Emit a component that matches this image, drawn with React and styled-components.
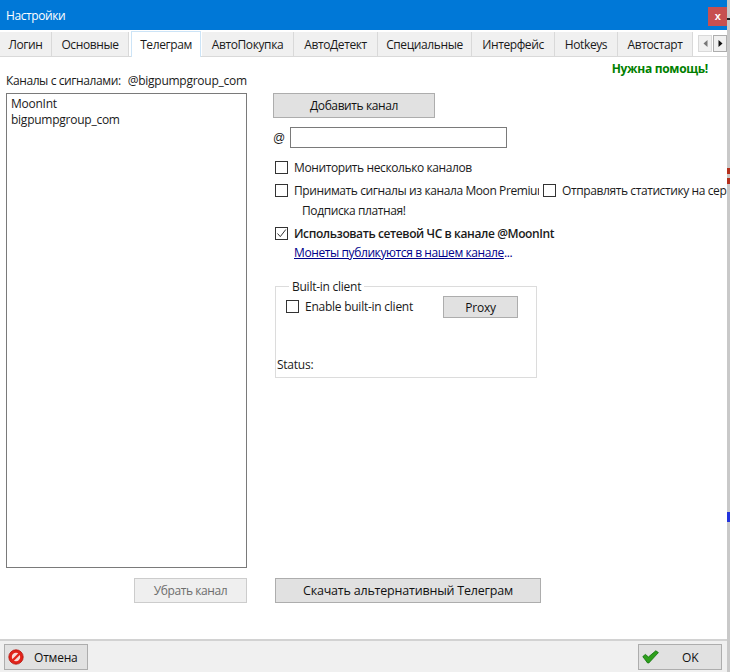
import React from 'react'
import styled, { createGlobalStyle } from 'styled-components'

const Global = createGlobalStyle`
  html, body { margin: 0; padding: 0; background: #fff; }
  body {
    font-family: "Open Sans", "Noto Sans", sans-serif;
    font-size: 12px;
    letter-spacing: -0.4px;
    color: #1a1a1a;
  }
  * { box-sizing: border-box; }
`

const Page = styled.div`
  display: flex;
  width: 730px;
  height: 672px;
  overflow: hidden;
`

const Dialog = styled.div`
  display: flex;
  flex-direction: column;
  width: 727px;
  height: 100%;
`

// what shows of the window behind the dialog
const BehindStrip = styled.div`
  width: 3px;
  height: 100%;
  background: linear-gradient(
    to bottom,
    #c9c9c9 0, #c9c9c9 18px, #222 18px, #222 20px, #c9c9c9 20px, #c9c9c9 168px,
    #b5301c 168px, #b5301c 174px, #c9c9c9 174px, #c9c9c9 178px,
    #b5301c 178px, #b5301c 184px, #c9c9c9 184px, #c9c9c9 512px,
    #2233dd 512px, #2233dd 522px, #c9c9c9 522px
  );
`

const TitleBar = styled.div`
  display: flex;
  align-items: center;
  justify-content: space-between;
  flex: none;
  height: 30px;
  padding: 0 0 0 6px;
  background: #0078d7;
  color: #fff;
  font-size: 12px;
`

const CloseButton = styled.div`
  display: flex;
  align-items: center;
  justify-content: center;
  width: 19px;
  height: 19px;
  margin-top: 3px;
  background: #c75050;
  color: #fff;
  font-family: "Liberation Sans", sans-serif;
  font-size: 11px;
  font-weight: 700;
  line-height: 1;
`

const TabStrip = styled.div`
  display: flex;
  align-items: flex-end;
  flex: none;
  height: 27px;
  background: #fff;
  border-bottom: 1px solid #d9d9d9;
`

const Tab = styled.div`
  display: flex;
  align-items: center;
  justify-content: center;
  flex: none;
  width: ${p => p.$w}px;
  height: ${p => (p.$active ? 26 : 24)}px;
  margin: ${p => (p.$active ? '0 1px -1px 2px' : '0')};
  background: ${p => (p.$active ? '#fff' : '#f0f0f0')};
  border: 1px solid ${p => (p.$active ? '#cce4f7' : '#d9d9d9')};
  border-width: ${p => (p.$active ? '1px 1px 0 1px' : '0 1px 0 0')};
`

const Scrollers = styled.div`
  display: flex;
  gap: 1px;
  margin: 0 0 4px 5px;
`

const ScrollButton = styled.div`
  display: flex;
  align-items: center;
  justify-content: center;
  width: 14px;
  height: 17px;
  background: #f0f0f0;
  border: 1px solid ${p => (p.$dark ? '#adadad' : '#d9d9d9')};
  color: ${p => (p.$dark ? '#111' : '#777')};
`

const Body = styled.div`
  display: grid;
  grid-template-columns: 241px 454px;
  column-gap: 26px;
  flex: 1;
  min-height: 0;
  padding: 0 0 36px 6px;
`

const LeftColumn = styled.div`
  display: flex;
  flex-direction: column;
  padding-top: 16px;
  min-height: 0;
`

const RightColumn = styled.div`
  display: flex;
  flex-direction: column;
  min-width: 0;
  overflow: hidden;
`

const ChannelsLabel = styled.div`
  display: flex;
  gap: 7px;
  height: 16px;
  line-height: 16px;
  white-space: nowrap;
`

const ChannelName = styled.span`
  letter-spacing: -0.25px;
`

const ChannelList = styled.div`
  flex: 1;
  margin-top: 4px;
  padding: 2px 4px;
  background: #fff;
  border: 1px solid #7a7a7a;
  letter-spacing: -0.25px;
`

const ChannelItem = styled.div`
  height: 16px;
  line-height: 16px;
`

const Button = styled.button`
  display: block;
  flex: none;
  width: ${p => p.$w}px;
  height: ${p => p.$h || 25}px;
  padding: 0;
  background: #e1e1e1;
  border: 1px solid #adadad;
  color: #111;
  font: inherit;
  letter-spacing: inherit;

  &:disabled {
    background: #efefef;
    border-color: #ccc;
    color: #6d6d6d;
  }
`

const RemoveButton = styled(Button)`
  margin: 10px 0 0 auto;
`

const HelpLink = styled.div`
  flex: none;
  height: 16px;
  margin-top: 4px;
  padding-right: 19px;
  line-height: 16px;
  text-align: right;
  color: #008000;
  font-size: 12px;
  font-weight: 700;
  letter-spacing: -0.3px;
`

const AddButton = styled(Button)`
  margin-top: 16px;
`

const NameRow = styled.div`
  display: flex;
  align-items: center;
  flex: none;
  height: 21px;
  margin-top: 9px;
`

const AtSign = styled.span`
  width: 17px;
  font-family: "Liberation Sans", sans-serif;
`

const NameInput = styled.input`
  width: 217px;
  height: 21px;
  padding: 0 2px;
  background: #fff;
  border: 1px solid #7a7a7a;
  border-radius: 0;
  outline: none;
`

const CheckRow = styled.div`
  display: flex;
  align-items: center;
  flex: none;
  height: 20px;
  margin-top: ${p => p.$top}px;
  padding-left: 2px;
  white-space: nowrap;
  font-weight: ${p => (p.$bold ? 600 : 400)};
`

const Box = styled.span`
  display: flex;
  align-items: center;
  justify-content: center;
  flex: none;
  width: 13px;
  height: 13px;
  margin-right: 6px;
  background: #fff;
  border: 1px solid #333;
`

const ClippedLabel = styled.span`
  display: block;
  flex: none;
  width: 245px;
  overflow: hidden;
  margin-right: 4px;
`

const PaidNote = styled.div`
  flex: none;
  height: 16px;
  margin-top: 3px;
  padding-left: 29px;
  line-height: 16px;
`

const LinkRow = styled.div`
  flex: none;
  height: 16px;
  margin-top: 2px;
  padding-left: 21px;
  line-height: 16px;
  color: #00008b;

  a {
    color: inherit;
    text-decoration: underline;
  }
`

const ClientGroup = styled.fieldset`
  flex: none;
  width: 262px;
  height: 100px;
  margin: 17px 0 0 2px;
  padding: 0;
  border: 1px solid #dcdcdc;
`

const GroupTitle = styled.legend`
  height: 16px;
  margin-left: 13px;
  padding: 0 3px;
  line-height: 18px;
  letter-spacing: -0.25px;
`

const GroupBody = styled.div`
  display: flex;
  flex-direction: column;
  height: 83px;
  padding: 2px 0 4px;
  letter-spacing: -0.25px;
`

const ClientRow = styled.div`
  display: flex;
  align-items: center;
  justify-content: space-between;
  padding: 0 18px 0 10px;
`

const EnableLabel = styled.div`
  display: flex;
  align-items: center;
  height: 20px;
  margin-bottom: 2px;
`

const StatusText = styled.div`
  margin-top: auto;
  padding-left: 1px;
  line-height: 16px;
`

const DownloadButton = styled(Button)`
  margin: auto 0 0 2px;
  font-size: 12.5px;
  letter-spacing: -0.2px;
`

const Footer = styled.div`
  display: flex;
  align-items: flex-start;
  justify-content: space-between;
  flex: none;
  height: 33px;
  padding: 3px 5px 0 4px;
  background: #f0f0f0;
  border-top: 2px solid #d2d2d2;
`

const ActionButton = styled.button`
  display: flex;
  align-items: center;
  width: 84px;
  height: 26px;
  padding: 0 0 0 ${p => p.$pad}px;
  background: #e1e1e1;
  border: 1px solid #adadad;
  color: #111;
  font: inherit;
  letter-spacing: -0.2px;
  font-weight: 500;
`

const ActionText = styled.span`
  margin-left: ${p => p.$gap}px;
`

const tabs = [
  ['Логин', 52],
  ['Основные', 77],
  ['Телеграм', 70, true],
  ['АвтоПокупка', 92],
  ['АвтоДетект', 84],
  ['Специальные', 94],
  ['Интерфейс', 83],
  ['Hotkeys', 63],
  ['Автостарт', 75],
]

const Check = () => (
  <svg width="11" height="11" viewBox="0 0 11 11">
    <path d="M1.5 5.5 L4.3 8.6 L9.8 1.5" fill="none" stroke="#333" strokeWidth="1" />
  </svg>
)

const CancelIcon = () => (
  <svg width="16" height="16" viewBox="0 0 16 16">
    <circle cx="8" cy="8" r="7.2" fill="#e2231a" stroke="#b3140e" strokeWidth="0.8" />
    <circle cx="8" cy="8" r="4.2" fill="#f8dcd8" />
    <path d="M3.6 11 L11 3.6 L12.6 5.2 L5.2 12.6 Z" fill="#e2231a" />
  </svg>
)

const OkIcon = () => (
  <svg width="17" height="14" viewBox="0 0 17 14">
    <path
      d="M0.8 6.6 L3.4 4.4 L6.4 7 L13.8 0.8 L16.4 2.6 L6.8 13 L5.6 13 Z"
      fill="#2ea01c"
      stroke="#0f6e0a"
      strokeWidth="0.8"
      strokeLinejoin="round"
    />
  </svg>
)

const Arrow = ({ dir }) => (
  <svg width="5" height="7" viewBox="0 0 5 7">
    <path d={dir === 'left' ? 'M4.5 0 L0.5 3.5 L4.5 7 Z' : 'M0.5 0 L4.5 3.5 L0.5 7 Z'} fill="currentColor" />
  </svg>
)

export default function App() {
  return (
    <Page>
      <Global />
      <Dialog>
        <TitleBar>
          <span>Настройки</span>
          <CloseButton>x</CloseButton>
        </TitleBar>
        <TabStrip>
          {tabs.map(([name, w, active]) => (
            <Tab key={name} $w={w} $active={active}>{name}</Tab>
          ))}
          <Scrollers>
            <ScrollButton><Arrow dir="left" /></ScrollButton>
            <ScrollButton $dark><Arrow dir="right" /></ScrollButton>
          </Scrollers>
        </TabStrip>
        <Body>
          <LeftColumn>
            <ChannelsLabel>
              <span>Каналы с сигналами:</span>
              <ChannelName>@bigpumpgroup_com</ChannelName>
            </ChannelsLabel>
            <ChannelList>
              <ChannelItem>MoonInt</ChannelItem>
              <ChannelItem>bigpumpgroup_com</ChannelItem>
            </ChannelList>
            <RemoveButton $w={113} disabled>Убрать канал</RemoveButton>
          </LeftColumn>
          <RightColumn>
            <HelpLink>Нужна помощь!</HelpLink>
            <AddButton $w={162}>Добавить канал</AddButton>
            <NameRow>
              <AtSign>@</AtSign>
              <NameInput />
            </NameRow>
            <CheckRow $top={9}>
              <Box />
              Мониторить несколько каналов
            </CheckRow>
            <CheckRow $top={3}>
              <Box />
              <ClippedLabel>Принимать сигналы из канала Moon Premium</ClippedLabel>
              <Box />
              Отправлять статистику на сервер
            </CheckRow>
            <PaidNote>Подписка платная!</PaidNote>
            <CheckRow $top={4} $bold>
              <Box><Check /></Box>
              Использовать сетевой ЧС в канале @MoonInt
            </CheckRow>
            <LinkRow><a>Монеты публикуются в нашем канале</a>...</LinkRow>
            <ClientGroup>
              <GroupTitle>Built-in client</GroupTitle>
              <GroupBody>
                <ClientRow>
                  <EnableLabel>
                    <Box />
                    Enable built-in client
                  </EnableLabel>
                  <Button $w={75} $h={22}>Proxy</Button>
                </ClientRow>
                <StatusText>Status:</StatusText>
              </GroupBody>
            </ClientGroup>
            <DownloadButton $w={266}>Скачать альтернативный Телеграм</DownloadButton>
          </RightColumn>
        </Body>
        <Footer>
          <ActionButton $pad={3}>
            <CancelIcon />
            <ActionText $gap={10}>Отмена</ActionText>
          </ActionButton>
          <ActionButton $pad={3}>
            <OkIcon />
            <ActionText $gap={23}>OK</ActionText>
          </ActionButton>
        </Footer>
      </Dialog>
      <BehindStrip />
    </Page>
  )
}
